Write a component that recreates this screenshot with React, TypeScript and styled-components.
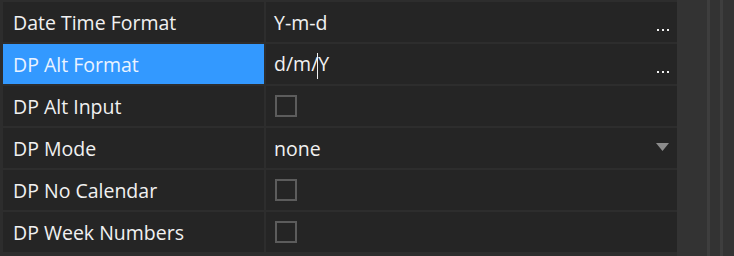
import React from "react";
import styled, { createGlobalStyle } from "styled-components";

const GlobalStyle = createGlobalStyle`
  html, body {
    margin: 0;
    padding: 0;
    background: #2d2d2d;
  }
  body {
    font-family: "Open Sans", "Noto Sans", sans-serif;
  }
`;

const Div_wrapper = styled.div`
  display: flex;
  width: 734px;
  height: 256px;
  overflow: hidden;
  background: #2d2d2d;
`;

const Div_grid = styled.div`
  display: grid;
  grid-template-columns: 261px 411px;
  grid-auto-rows: 40px;
  gap: 2px;
  padding: 2px 0 0 3px;
  background: #2d2d2d;
`;

const Div_label = styled.div<{ $selected?: boolean }>`
  display: flex;
  align-items: center;
  padding: 1px 0 0 10px;
  background: ${(p) => (p.$selected ? "#3399ff" : "#252525")};
  color: ${(p) => (p.$selected ? "#eaf3ff" : "#f1f1f1")};
  font-size: 19.5px;
  white-space: nowrap;
`;

const Div_value = styled.div`
  display: flex;
  align-items: center;
  padding: 1px 8px 0 8px;
  background: #252525;
  color: #f1f1f1;
  font-size: 19.5px;
  white-space: nowrap;
`;

const Span_text = styled.span`
  flex: 1;
`;

const Span_caret = styled.span`
  display: inline-block;
  width: 1px;
  height: 26px;
  margin-left: -1px;
  vertical-align: middle;
  background: #f1f1f1;
`;

const Span_ellipsis = styled.span`
  display: flex;
  gap: 3px;
  margin-top: 15px;
`;

const Span_dot = styled.span`
  width: 2px;
  height: 2px;
  background: #f1f1f1;
`;

const Span_checkbox = styled.span`
  box-sizing: border-box;
  width: 22px;
  height: 22px;
  margin: -1px 0 0 1px;
  border: 2px solid #5c5c5c;
`;

const Svg_arrow = styled.svg`
  width: 13px;
  height: 8px;
  margin-top: -3px;
`;

const Div_side = styled.div`
  display: flex;
  flex: 1;
  background: #333333;
  padding-left: 30px;
`;

const Div_sideLine = styled.div<{ $space: number }>`
  width: 3px;
  margin-right: ${(p) => p.$space}px;
  background: #3e3e3e;
`;

const Ellipsis: React.FC = () => (
  <Span_ellipsis>
    <Span_dot />
    <Span_dot />
    <Span_dot />
  </Span_ellipsis>
);

const App: React.FC = () => {
  return (
    <>
      <GlobalStyle />
      <Div_wrapper>
        <Div_grid>
          <Div_label>Date Time Format</Div_label>
          <Div_value>
            <Span_text>Y-m-d</Span_text>
            <Ellipsis />
          </Div_value>

          <Div_label $selected>DP Alt Format</Div_label>
          <Div_value>
            <Span_text>
              d/m/<Span_caret />Y
            </Span_text>
            <Ellipsis />
          </Div_value>

          <Div_label>DP Alt Input</Div_label>
          <Div_value>
            <Span_checkbox />
          </Div_value>

          <Div_label>DP Mode</Div_label>
          <Div_value>
            <Span_text>none</Span_text>
            <Svg_arrow viewBox="0 0 13 8">
              <path d="M0 0 H13 L6.5 8 Z" fill="#8c8c8c" />
            </Svg_arrow>
          </Div_value>

          <Div_label>DP No Calendar</Div_label>
          <Div_value>
            <Span_checkbox />
          </Div_value>

          <Div_label>DP Week Numbers</Div_label>
          <Div_value>
            <Span_checkbox />
          </Div_value>
        </Div_grid>
        <Div_side>
          <Div_sideLine $space={10} />
          <Div_sideLine $space={0} />
        </Div_side>
      </Div_wrapper>
    </>
  );
};

export default App;
